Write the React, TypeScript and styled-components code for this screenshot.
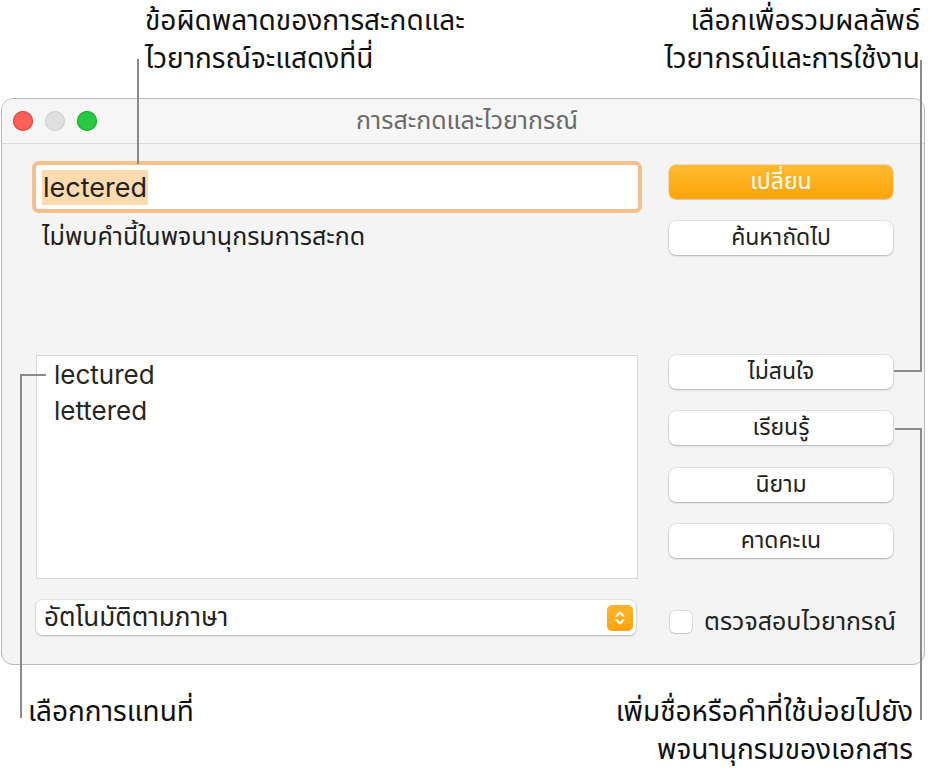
import React from 'react';
import styled, { createGlobalStyle } from 'styled-components';

const GlobalStyle = createGlobalStyle`
  html, body {
    margin: 0;
    padding: 0;
    background: #ffffff;
  }
  body {
    font-family: 'Noto Sans Thai', 'Noto Sans', 'DejaVu Sans', sans-serif;
    color: #1d1d1d;
  }
`;

const Page = styled.div`
  position: relative;
  width: 935px;
  height: 774px;
  overflow: hidden;
  background: #ffffff;
`;

const NoteRow = styled.div<{ top: number; height: number }>`
  display: flex;
  justify-content: space-between;
  align-items: flex-start;
  padding-top: ${(p) => p.top}px;
  height: ${(p) => p.height}px;
  box-sizing: border-box;
`;

const Note = styled.div<{ align: 'left' | 'right'; inset: number }>`
  font-size: 28px;
  line-height: 38px;
  color: #111;
  white-space: nowrap;
  text-align: ${(p) => p.align};
  ${(p) => (p.align === 'left' ? `margin-left: ${p.inset}px;` : `margin-right: ${p.inset}px;`)}
`;

const Window = styled.div`
  margin-left: 1px;
  width: 924px;
  height: 567px;
  box-sizing: border-box;
  border: 1px solid #b9b9b9;
  border-radius: 12px;
  background: #f4f4f4;
  overflow: hidden;
  display: flex;
  flex-direction: column;
`;

const TitleBar = styled.div`
  position: relative;
  height: 45px;
  flex: none;
  display: flex;
  align-items: center;
  justify-content: center;
  background: #f6f6f6;
  border-bottom: 1px solid #d9d9d9;
  box-sizing: border-box;
`;

const Lights = styled.div`
  position: absolute;
  left: 11px;
  top: 12px;
  display: flex;
  gap: 12px;
`;

const Light = styled.span<{ color: string; edge: string }>`
  width: 20px;
  height: 20px;
  border-radius: 50%;
  background: ${(p) => p.color};
  box-shadow: inset 0 0 0 1px ${(p) => p.edge};
`;

const Title = styled.div`
  font-size: 25px;
  line-height: 30px;
  color: #6a6a6a;
  margin-left: 8px;
`;

const Content = styled.div`
  display: grid;
  grid-template-columns: 610px 224px;
  column-gap: 27px;
  padding: 17px 31px 0 30px;
`;

const Column = styled.div`
  display: flex;
  flex-direction: column;
`;

const FieldRing = styled.div`
  height: 52px;
  box-sizing: border-box;
  border: 4px solid #f5bf8c;
  border-radius: 7px;
  background: #ffffff;
  display: flex;
  align-items: center;
  padding-left: 6px;
`;

const Selected = styled.span`
  background: #fddbb1;
  font-family: Inter, 'Liberation Sans', sans-serif;
  font-size: 27px;
  line-height: 35px;
  padding: 0 1px;
  color: #222;
`;

const Message = styled.div`
  margin-top: 9px;
  margin-left: 10px;
  font-size: 25px;
  line-height: 30px;
  color: #1e1e1e;
`;

const ListBox = styled.div`
  margin-top: 103px;
  margin-left: 4px;
  width: 602px;
  height: 224px;
  box-sizing: border-box;
  background: #ffffff;
  border: 1px solid #d8d8d8;
  padding: 1px 0 0 17px;
`;

const Suggestion = styled.div`
  font-family: Inter, 'Liberation Sans', sans-serif;
  font-size: 26px;
  line-height: 36px;
  color: #262626;
`;

const Popup = styled.div`
  margin-top: 21px;
  margin-left: 4px;
  width: 600px;
  height: 35px;
  box-sizing: border-box;
  background: #ffffff;
  border-radius: 6px;
  box-shadow: 0 0 0 0.5px rgba(0, 0, 0, 0.12), 0 1px 2px rgba(0, 0, 0, 0.22);
  display: flex;
  align-items: center;
  justify-content: space-between;
  padding: 0 3px 0 8px;
`;

const PopupText = styled.span`
  font-size: 26px;
  line-height: 30px;
  color: #222;
`;

const Stepper = styled.span`
  width: 26px;
  height: 26px;
  border-radius: 5px;
  background: linear-gradient(#ffb42c, #ffa40a);
  display: flex;
  align-items: center;
  justify-content: center;
`;

const Button = styled.div<{ primary?: boolean; gap: number }>`
  margin-top: ${(p) => p.gap}px;
  height: 34px;
  border-radius: 7px;
  display: flex;
  align-items: center;
  justify-content: center;
  font-size: 23px;
  line-height: 28px;
  color: ${(p) => (p.primary ? '#ffffff' : '#222')};
  background: ${(p) => (p.primary ? 'linear-gradient(#ffba30, #ffa408)' : '#ffffff')};
  box-shadow: ${(p) =>
    p.primary
      ? '0 0 0 0.5px rgba(230, 140, 0, 0.5), 0 1px 1px rgba(0, 0, 0, 0.1)'
      : '0 0 0 0.5px rgba(0, 0, 0, 0.12), 0 1px 2px rgba(0, 0, 0, 0.22)'};
`;

const CheckRow = styled.label`
  margin-top: 50px;
  display: flex;
  align-items: center;
  gap: 12px;
  font-size: 25px;
  line-height: 28px;
  white-space: nowrap;
  color: #222;
`;

const Box = styled.span`
  width: 22px;
  height: 22px;
  flex: none;
  box-sizing: border-box;
  border-radius: 5px;
  background: #ffffff;
  box-shadow: 0 0 0 1px rgba(0, 0, 0, 0.1), 0 1px 1px rgba(0, 0, 0, 0.1);
  margin-left: 1px;
`;

const Leaders = styled.svg`
  position: absolute;
  left: 0;
  top: 0;
  pointer-events: none;
`;

const Chevrons = () => (
  <svg width='12' height='18' viewBox='0 0 12 18' fill='none'>
    <path d='M2.5 7L6 3.5L9.5 7' stroke='#fff' strokeWidth='2' strokeLinecap='round' strokeLinejoin='round' />
    <path d='M2.5 11L6 14.5L9.5 11' stroke='#fff' strokeWidth='2' strokeLinecap='round' strokeLinejoin='round' />
  </svg>
);

export default function App() {
  return (
    <Page>
      <GlobalStyle />
      <NoteRow top={3} height={98}>
        <Note align='left' inset={145}>
          ข้อผิดพลาดของการสะกดและ
          <br />
          ไวยากรณ์จะแสดงที่นี่
        </Note>
        <Note align='right' inset={15}>
          เลือกเพื่อรวมผลลัพธ์
          <br />
          ไวยากรณ์และการใช้งาน
        </Note>
      </NoteRow>

      <Window>
        <TitleBar>
          <Lights>
            <Light color='#fe5f57' edge='#e2463f' />
            <Light color='#e0e0e0' edge='#cfcfcf' />
            <Light color='#28c840' edge='#1aab29' />
          </Lights>
          <Title>การสะกดและไวยากรณ์</Title>
        </TitleBar>
        <Content>
          <Column>
            <FieldRing>
              <Selected>lectered</Selected>
            </FieldRing>
            <Message>ไม่พบคำนี้ในพจนานุกรมการสะกด</Message>
            <ListBox>
              <Suggestion>lectured</Suggestion>
              <Suggestion>lettered</Suggestion>
            </ListBox>
            <Popup>
              <PopupText>อัตโนมัติตามภาษา</PopupText>
              <Stepper>
                <Chevrons />
              </Stepper>
            </Popup>
          </Column>
          <Column>
            <Button primary gap={4}>เปลี่ยน</Button>
            <Button gap={22}>ค้นหาถัดไป</Button>
            <Button gap={100}>ไม่สนใจ</Button>
            <Button gap={22}>เรียนรู้</Button>
            <Button gap={23}>นิยาม</Button>
            <Button gap={22}>คาดคะเน</Button>
            <CheckRow>
              <Box />
              ตรวจสอบไวยากรณ์
            </CheckRow>
          </Column>
        </Content>
      </Window>

      <NoteRow top={29} height={109}>
        <Note align='left' inset={28}>
          เลือกการแทนที่
        </Note>
        <Note align='right' inset={22}>
          เพิ่มชื่อหรือคำที่ใช้บ่อยไปยัง
          <br />
          พจนานุกรมของเอกสาร
        </Note>
      </NoteRow>

      <Leaders width='935' height='774' viewBox='0 0 935 774'>
        <g stroke='#8a8a8a' strokeWidth='2' fill='none'>
          <path d='M138 59V164' />
          <path d='M921 60V371H894' />
          <path d='M895 429H921V720' />
          <path d='M21 718V375H46' />
        </g>
      </Leaders>
    </Page>
  );
}
